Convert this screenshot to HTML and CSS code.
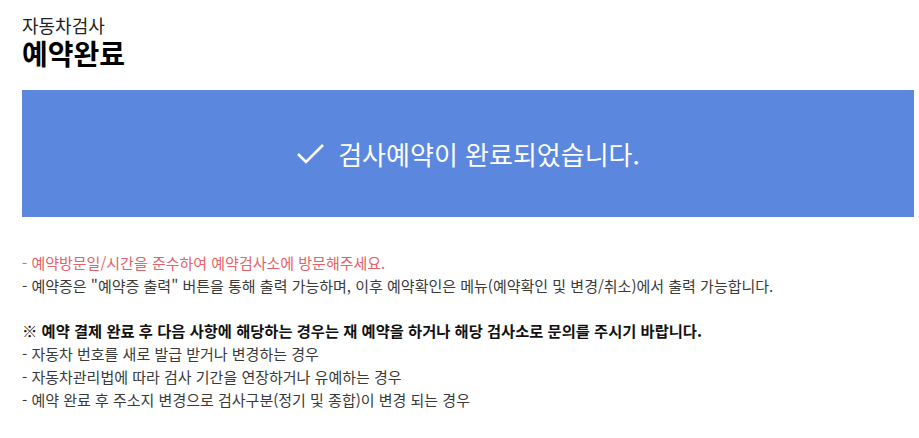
FILE: index.html
```html
<!DOCTYPE html>
<html lang="ko">
<head>
    <meta charset="UTF-8">
    <meta name="viewport" content="width=device-width, initial-scale=1.0">
    <title>예약완료</title>
    <link rel="stylesheet" href="styles.css">
</head>
<body>
    <div class="page">
        <div class="pageHead">
            <p class="subTitle">자동차검사</p>
            <h1 class="title">예약완료</h1>
        </div>

        <div class="doneBox">
            <svg class="checkIcon" width="30" height="24" viewBox="0 0 30 24">
                <path d="M2 12 L10 20 L27 3" fill="none" stroke="#fff" stroke-width="2.6"/>
            </svg>
            <span>검사예약이 완료되었습니다.</span>
        </div>

        <div class="notes">
            <p class="red">- 예약방문일/시간을 준수하여 예약검사소에 방문해주세요.</p>
            <p>- 예약증은 "예약증 출력" 버튼을 통해 출력 가능하며, 이후 예약확인은 메뉴(예약확인 및 변경/취소)에서 출력 가능합니다.</p>
            <p class="bold gapTop">※ 예약 결제 완료 후 다음 사항에 해당하는 경우는 재 예약을 하거나 해당 검사소로 문의를 주시기 바랍니다.</p>
            <p>- 자동차 번호를 새로 발급 받거나 변경하는 경우</p>
            <p>- 자동차관리법에 따라 검사 기간을 연장하거나 유예하는 경우</p>
            <p>- 예약 완료 후 주소지 변경으로 검사구분(정기 및 종합)이 변경 되는 경우</p>
        </div>
    </div>
</body>
</html>
```

FILE: styles.css
```css
body {
    margin: 0;
    padding: 0;
    background-color: #fff;
    font-family: "Noto Sans CJK KR", "Noto Sans", sans-serif;
    color: #3a3a3a;
}
.page {
    padding: 12px 5px 0 22px;
}
.pageHead p, .pageHead h1 {
    margin: 0;
}
.subTitle {
    font-size: 18px;
    line-height: 26px;
    color: #222;
}
.title {
    font-size: 28px;
    line-height: 30px;
    font-weight: bold;
    color: #000;
}
.doneBox {
    margin-top: 22px;
    height: 127px;
    background-color: #5b87de;
    color: #fff;
    display: flex;
    align-items: center;
    justify-content: center;
    gap: 12px;
    font-size: 26px;
}
.checkIcon {
    display: block;
}
.notes {
    margin-top: 34px;
    font-size: 15px;
}
.notes p {
    margin: 0;
    line-height: 23px;
    white-space: nowrap;
}
.red {
    color: #e3636a;
}
.bold {
    font-weight: bold;
    color: #111;
    font-size: 15.3px;
}
.gapTop {
    margin-top: 22px !important;
}
```
